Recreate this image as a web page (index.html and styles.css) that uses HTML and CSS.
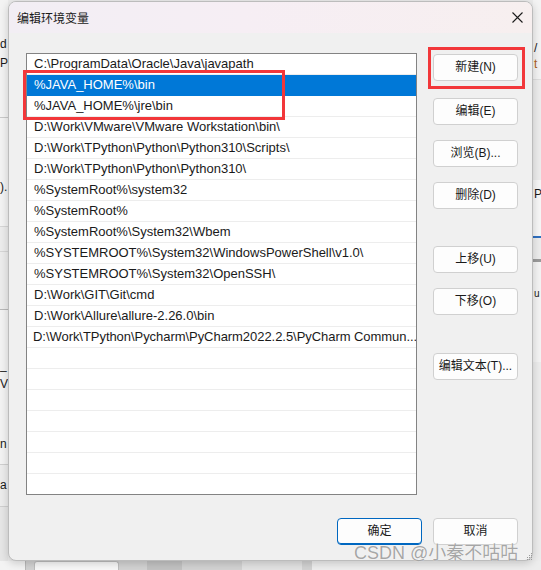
FILE: index.html
```html
<!DOCTYPE html>
<html lang="zh-CN">
<head>
<meta charset="utf-8">
<title>编辑环境变量</title>
<link rel="stylesheet" href="styles.css">
</head>
<body>
<div class="desktop">
  <div class="strip strip-left">
    <div class="seg seg-a"></div>
    <div class="seg seg-b"><span class="frag">d</span><span class="frag">P</span></div>
    <div class="seg seg-c"><span class="frag">).</span></div>
    <div class="seg seg-d"></div>
    <div class="seg seg-e"></div>
    <div class="seg seg-f"><span class="frag">_</span><span class="frag">V</span></div>
    <div class="seg seg-g"><span class="frag">n</span></div>
    <div class="seg seg-h"><span class="frag">a</span></div>
    <div class="seg seg-i"></div>
  </div>

  <div class="dialog">
    <div class="titlebar">
      <span class="title">编辑环境变量</span>
      <svg class="close" width="11" height="11" viewBox="0 0 11 11"><path d="M0.5 0.5 L10.5 10.5 M10.5 0.5 L0.5 10.5" stroke="#1b1b1b" stroke-width="1.1" fill="none"/></svg>
    </div>
    <div class="content">
      <div class="main">
        <div class="list">
          <div class="row">C:\ProgramData\Oracle\Java\javapath</div>
          <div class="row selected">%JAVA_HOME%\bin</div>
          <div class="row">%JAVA_HOME%\jre\bin</div>
          <div class="row">D:\Work\VMware\VMware Workstation\bin\</div>
          <div class="row">D:\Work\TPython\Python\Python310\Scripts\</div>
          <div class="row">D:\Work\TPython\Python\Python310\</div>
          <div class="row">%SystemRoot%\system32</div>
          <div class="row">%SystemRoot%</div>
          <div class="row">%SystemRoot%\System32\Wbem</div>
          <div class="row">%SYSTEMROOT%\System32\WindowsPowerShell\v1.0\</div>
          <div class="row">%SYSTEMROOT%\System32\OpenSSH\</div>
          <div class="row">D:\Work\GIT\Git\cmd</div>
          <div class="row">D:\Work\Allure\allure-2.26.0\bin</div>
          <div class="row tight">D:\Work\TPython\Pycharm\PyCharm2022.2.5\PyCharm Commun...</div>
          <div class="row"></div>
          <div class="row"></div>
          <div class="row"></div>
          <div class="row"></div>
          <div class="row"></div>
          <div class="row"></div>
          <div class="row last"></div>
        </div>
        <div class="side">
          <button class="btn g1">新建(N)</button>
          <button class="btn g2">编辑(E)</button>
          <button class="btn g3">浏览(B)...</button>
          <button class="btn g3">删除(D)</button>
          <button class="btn g4">上移(U)</button>
          <button class="btn g3">下移(O)</button>
          <button class="btn g5">编辑文本(T)...</button>
        </div>
      </div>
      <div class="footer">
        <button class="btn primary">确定</button>
        <button class="btn">取消</button>
      </div>
    </div>
    <div class="mark mark-java"></div>
    <div class="mark mark-new"></div>
    <div class="watermark">CSDN @小秦不咕咕</div>
    <svg class="grip" width="7" height="7" viewBox="0 0 7 7">
      <rect x="5" y="0" width="1" height="1" fill="#9a9a9a"/>
      <rect x="3" y="2" width="1" height="1" fill="#9a9a9a"/>
      <rect x="5" y="2" width="1" height="1" fill="#9a9a9a"/>
      <rect x="1" y="4" width="1" height="1" fill="#9a9a9a"/>
      <rect x="3" y="4" width="1" height="1" fill="#9a9a9a"/>
      <rect x="5" y="4" width="1" height="1" fill="#9a9a9a"/>
      <rect x="1" y="6" width="1" height="1" fill="#9a9a9a"/>
      <rect x="3" y="6" width="1" height="1" fill="#9a9a9a"/>
      <rect x="5" y="6" width="1" height="1" fill="#9a9a9a"/>
    </svg>
  </div>

  <div class="strip strip-right">
    <div class="rseg rseg-a"></div>
    <div class="rseg rseg-b"><span class="rfrag">/</span><span class="rfrag orange">t</span></div>
    <div class="rseg rseg-c"></div>
    <div class="rseg rseg-d"><span class="rfrag">P</span></div>
    <div class="rseg rseg-e"></div>
    <div class="rseg rseg-f"><span class="rfrag small">u</span></div>
    <div class="rseg rseg-g"></div>
  </div>

  <div class="bottom">
    <div class="bseg bseg-a"></div>
    <div class="bseg bseg-b"></div>
    <div class="bseg bseg-c"></div>
    <div class="bseg bseg-d"></div>
    <div class="bseg bseg-e"></div>
  </div>
</div>
</body>
</html>
```

FILE: styles.css
```css
* { box-sizing: border-box; }

html, body {
  margin: 0;
  padding: 0;
  width: 541px;
  height: 570px;
  overflow: hidden;
  background: #ececec;
  font-family: "Liberation Sans", "Noto Sans CJK SC", sans-serif;
  color: #1a1a1a;
}

.desktop {
  display: grid;
  grid-template-columns: 8px 525px 8px;
  grid-template-rows: 561px 9px;
  width: 541px;
  height: 570px;
}

/* ---------- background window slivers ---------- */
.strip {
  overflow: hidden;
  display: flex;
  flex-direction: column;
  background: #f0f0f0;
}

.seg {
  display: flex;
  flex-direction: column;
  justify-content: center;
  align-items: flex-start;
  font-size: 12px;
  line-height: 19px;
  white-space: nowrap;
}
.frag { display: block; }
.seg-a { height: 20px; background: #f3f3f3; }
.seg-b { height: 98px; background: #f3f3f3; border-bottom: 1px solid #c9c9c9; justify-content: flex-start; padding-top: 15px; }
.seg-c { height: 109px; background: #f3f3f3; border-bottom: 1px solid #d6d6d6; padding-top: 30px; }
.seg-d { height: 25px; background: #ececec; border-bottom: 1px solid #d6d6d6; }
.seg-e { height: 58px; background: #ececec; border-bottom: 1px solid #b8b8b8; }
.seg-f { height: 90px; background: #f3f3f3; justify-content: flex-end; padding-bottom: 6px; }
.seg-g { height: 65px; background: #f3f3f3; border-bottom: 1px solid #cfcfcf; justify-content: flex-end; padding-bottom: 10px; }
.seg-h { height: 42px; background: #ececec; border-bottom: 1px solid #cfcfcf; }
.seg-i { flex: 1; background: #e6e6e6; }

.strip-right { align-items: stretch; }
.rseg {
  display: flex;
  flex-direction: column;
  font-size: 12px;
  line-height: 16px;
  white-space: nowrap;
  padding-left: 1px;
}
.rfrag { display: block; }
.rfrag.orange { color: #b06020; }
.rfrag.small { font-size: 10px; }
.rseg-a { height: 40px; background: #f3f3f3; }
.rseg-b { height: 40px; background: #f3f3f3; border-bottom: 1px solid #dedede; }
.rseg-c { height: 100px; background: #ececec; }
.rseg-d { height: 58px; background: #f6f6f6; border-bottom: 2px solid #2f6fbf; padding-top: 6px; }
.rseg-e { height: 24px; background: #ececec; border-bottom: 3px solid #9a9a9a; }
.rseg-f { height: 100px; background: #f3f3f3; padding-top: 24px; }
.rseg-g { flex: 1; background: #ececec; }

.bottom {
  grid-column: 1 / 4;
  display: flex;
  background: #d2d2d2;
}
.bseg { height: 9px; }
.bseg-a { width: 26px; background: #f3f3f3; border-right: 1px solid #b9b9b9; }
.bseg-b { width: 85px; margin-left: 8px; background: #f7f7f7; border: 1px solid #bdbdbd; border-bottom: none; border-radius: 3px 3px 0 0; }
.bseg-c { width: 35px; margin-left: 28px; background: #c2c2c2; }
.bseg-d { width: 60px; margin-left: 60px; background: #e2e2e2; }
.bseg-e { flex: 1; margin-left: 10px; background: #ededed; }

/* ---------- dialog ---------- */
.dialog {
  position: relative;
  grid-column: 2;
  grid-row: 1;
  margin-top: 1px;
  height: 560px;
  background: #f0f0f0;
  border: 1px solid #bcbcbc;
  border-radius: 8px;
  box-shadow: 0 2px 8px rgba(0, 0, 0, 0.18);
}

.titlebar {
  height: 31px;
  display: flex;
  align-items: center;
  justify-content: space-between;
  padding: 0 9px 0 8px;
  border-radius: 7px 7px 0 0;
  background: linear-gradient(90deg, #f2eef4 0%, #f6eef4 45%, #f7efef 100%);
}
.title {
  font-family: "Noto Sans CJK SC", sans-serif;
  font-size: 12px;
  color: #1a1a1a;
}
.close { display: block; margin-top: -1px; }

.content {
  padding: 20px 0 0 17px;
}

.main {
  display: flex;
  gap: 16px;
}

.list {
  width: 391px;
  height: 442px;
  background: #ffffff;
  border: 1px solid #838383;
  overflow: hidden;
}

.row {
  height: 21px;
  line-height: 20px;
  padding-left: 7px;
  font-size: 13px;
  color: #1a1a1a;
  border-bottom: 1px solid #ededed;
  white-space: nowrap;
  overflow: hidden;
}
.row.tight { padding-left: 6px; letter-spacing: -0.05px; }
.row.selected {
  background: #0078d7;
  color: #ffffff;
  border-bottom-color: #0078d7;
}
.row.last { border-bottom: none; }

.side {
  width: 85px;
  display: flex;
  flex-direction: column;
}

.btn {
  width: 85px;
  height: 27px;
  padding: 0;
  background: #fdfdfd;
  border: 1px solid #d0d0d0;
  border-radius: 4px;
  font-family: "Liberation Sans", "Noto Sans CJK SC", sans-serif;
  font-size: 12px;
  color: #1a1a1a;
  line-height: 25px;
  text-align: center;
}
.btn.primary {
  border: 1px solid #0067c0;
  box-shadow: inset 0 -1px 0 #0067c0;
}

.g1 { margin-top: 1px; }
.g2 { margin-top: 17px; }
.g3 { margin-top: 15px; }
.g4 { margin-top: 37px; }
.g5 { margin-top: 38px; }

.footer {
  display: flex;
  justify-content: flex-end;
  gap: 11px;
  margin-top: 23px;
  padding-right: 14px;
}

/* ---------- overlays ---------- */
.mark {
  position: absolute;
  border: 3px solid #f2373a;
}
.mark-java { left: 14px; top: 68px; width: 262px; height: 50px; }
.mark-new { left: 419px; top: 45px; width: 97px; height: 42px; }

.watermark {
  position: absolute;
  left: 345px;
  top: 541px;
  font-family: "Liberation Sans", "Noto Sans CJK SC", sans-serif;
  font-size: 18px;
  line-height: 20px;
  color: rgba(150, 150, 150, 0.85);
  text-shadow: 0 0 1px #ffffff;
  white-space: nowrap;
}

.grip {
  position: absolute;
  left: 517px;
  top: 551px;
}
```
